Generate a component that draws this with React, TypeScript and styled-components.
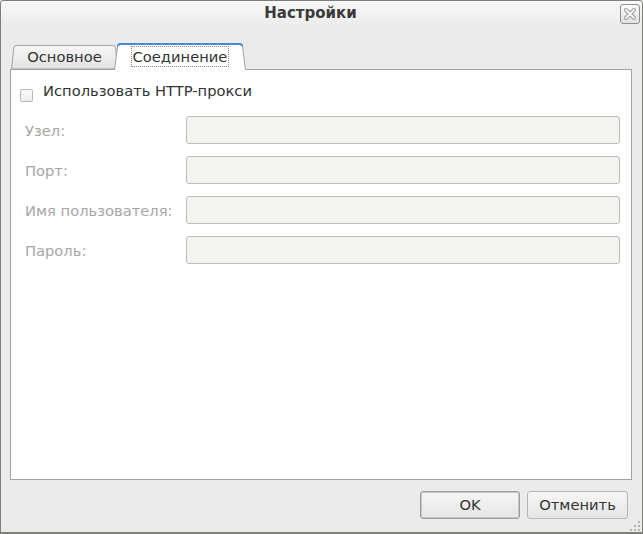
import React from "react";
import styled, { createGlobalStyle } from "styled-components";

const Global = createGlobalStyle`
  html, body { margin: 0; padding: 0; background: #ebebeb; }
  body {
    font-family: "DejaVu Sans", "Liberation Sans", sans-serif;
    font-size: 14.7px;
    color: #333333;
  }
  * { box-sizing: border-box; }
`;

const Window = styled.div`
  position: relative;
  width: 643px;
  height: 534px;
  display: flex;
  flex-direction: column;
  background: #ebebeb;
  border: 1px solid #7f7f7b;
  border-bottom-width: 2px;
  border-radius: 4px 4px 0 0;
  overflow: hidden;
`;

const TitleBar = styled.div`
  flex: none;
  height: 25px;
  display: flex;
  align-items: center;
  background: linear-gradient(#f8f8f8, #ececec);
`;

const Title = styled.div`
  flex: 1;
  text-align: center;
  font-weight: bold;
  font-size: 15px;
  line-height: 17px;
  color: #3a3a3a;
`;

const CloseButton = styled.button`
  width: 20px;
  height: 20px;
  margin-right: 2px;
  padding: 0;
  border: 1px solid #8e8e8e;
  border-radius: 3px;
  background: linear-gradient(#fbfbfb, #e2e2e2);
  display: flex;
  align-items: center;
  justify-content: center;
`;

const Body = styled.div`
  flex: 1;
  min-height: 0;
  display: flex;
  flex-direction: column;
  padding: 17px 10px 0 9px;
`;

const TabBar = styled.div`
  position: relative;
  z-index: 1;
  flex: none;
  height: 27px;
  margin-bottom: -1px;
  padding-left: 1px;
  display: flex;
  align-items: flex-end;
`;

const Tab = styled.div<{ $active?: boolean }>`
  position: relative;
  display: flex;
  align-items: center;
  justify-content: center;
  width: ${(p) => (p.$active ? "132px" : "107px")};
  height: ${(p) => (p.$active ? "27px" : "24px")};
  margin-left: ${(p) => (p.$active ? "-4px" : "0")};
  margin-bottom: ${(p) => (p.$active ? "0" : "1px")};
  padding-bottom: ${(p) => (p.$active ? "1px" : "2px")};
`;

const TabShape = styled.svg`
  position: absolute;
  inset: 0;
`;

const TabLabel = styled.span<{ $focused?: boolean }>`
  position: relative;
  line-height: 17px;
  color: #333333;
  padding: ${(p) => (p.$focused ? "1px 1px" : "0")};
  border: ${(p) => (p.$focused ? "1px dotted #8a8a8a" : "none")};
`;

const Panel = styled.div`
  flex: 1;
  background: #ffffff;
  border: 1px solid #a3a3a3;
  padding: 0 11px 0 9px;
`;

const CheckRow = styled.label`
  display: flex;
  align-items: flex-start;
  padding-top: 12px;
  line-height: 17px;
  color: #333333;
`;

const CheckBox = styled.span`
  width: 13px;
  height: 13px;
  margin-top: 7px;
  margin-right: 10px;
  border: 1px solid #b9b9b1;
  border-radius: 2px;
  background: linear-gradient(#fafaf9, #eeeeec);
`;

const FormGrid = styled.div`
  display: grid;
  grid-template-columns: 150px 1fr;
  grid-auto-rows: 28px;
  column-gap: 11px;
  row-gap: 12px;
  margin-top: 14px;
  padding-left: 5px;
`;

const FieldLabel = styled.div`
  display: flex;
  align-items: center;
  color: #a6a6a6;
  white-space: nowrap;
`;

const Field = styled.div`
  background: #f3f3f1;
  border: 1px solid #bdbdb3;
  border-radius: 3px;
`;

const Footer = styled.div`
  flex: none;
  height: 52px;
  display: flex;
  justify-content: flex-end;
  align-items: flex-start;
  gap: 7px;
  padding: 11px 14px 0 0;
`;

const Button = styled.button<{ $default?: boolean; $w: number }>`
  width: ${(p) => p.$w}px;
  height: 28px;
  padding: 0 0 2px;
  font-family: "DejaVu Sans", "Liberation Sans", sans-serif;
  font-size: 14.7px;
  color: #333333;
  border-radius: 3px;
  border: 1px solid ${(p) => (p.$default ? "#9c9c9c" : "#b5b5b5")};
  box-shadow: ${(p) => (p.$default ? "inset 0 0 0 1px #c9c9c9" : "none")};
  background: linear-gradient(#f6f6f6, #e5e5e5);
`;

const Grip = styled.svg`
  position: absolute;
  right: 2px;
  bottom: 0;
`;

const fields = ["Узел:", "Порт:", "Имя пользователя:", "Пароль:"];

export default function App() {
  return (
    <>
      <Global />
      <Window>
        <TitleBar>
          <Title>Настройки</Title>
          <CloseButton aria-label="close">
            <svg width="14" height="14" viewBox="0 0 14 14">
              <path d="M3 3 L11 11 M11 3 L3 11" stroke="#9b9b9b" strokeWidth="4" strokeLinecap="round" />
              <path d="M3 3 L11 11 M11 3 L3 11" stroke="#f6f6f6" strokeWidth="2" strokeLinecap="round" />
            </svg>
          </CloseButton>
        </TitleBar>
        <Body>
          <TabBar>
            <Tab>
              <TabShape width="107" height="24" viewBox="0 0 107 24">
                <defs>
                  <linearGradient id="tabg" x1="0" y1="0" x2="0" y2="1">
                    <stop offset="0" stopColor="#f7f7f7" />
                    <stop offset="1" stopColor="#e2e2e2" />
                  </linearGradient>
                </defs>
                <path d="M0.5 24 L2.8 3 Q3.2 0.5 5.5 0.5 L102 0.5 Q104.3 0.5 104.6 3 L106.5 24 Z" fill="url(#tabg)" stroke="#a2a2a2" />
              </TabShape>
              <TabLabel>Основное</TabLabel>
            </Tab>
            <Tab $active>
              <TabShape width="132" height="27" viewBox="0 0 132 27">
                <path d="M0.5 27 L3.6 3 Q4 0.5 6.5 0.5 L125.5 0.5 Q128 0.5 128.4 3 L131.5 27 Z" fill="#ffffff" />
                <path d="M0.5 27 L3.6 3 Q4 0.5 6.5 0.5 L125.5 0.5 Q128 0.5 128.4 3 L131.5 27" fill="none" stroke="#a2a2a2" />
                <path d="M3.8 3 Q4.2 1 6.5 1 L125.5 1 Q127.8 1 128.2 3" fill="none" stroke="#4a8ad4" strokeWidth="2" />
              </TabShape>
              <TabLabel $focused>Соединение</TabLabel>
            </Tab>
          </TabBar>
          <Panel>
            <CheckRow>
              <CheckBox />
              Использовать HTTP-прокси
            </CheckRow>
            <FormGrid>
              {fields.map((f) => (
                <React.Fragment key={f}>
                  <FieldLabel>{f}</FieldLabel>
                  <Field />
                </React.Fragment>
              ))}
            </FormGrid>
          </Panel>
        </Body>
        <Footer>
          <Button $default $w={100}>OK</Button>
          <Button $w={101}>Отменить</Button>
        </Footer>
        <Grip width="10" height="11" viewBox="0 0 10 11">
          <g fill="#b3b3b3">
            <rect x="8" y="0" width="2" height="2" />
            <rect x="4" y="4" width="2" height="2" />
            <rect x="8" y="4" width="2" height="2" />
            <rect x="0" y="8" width="2" height="2" />
            <rect x="4" y="8" width="2" height="2" />
            <rect x="8" y="8" width="2" height="2" />
          </g>
        </Grip>
      </Window>
    </>
  );
}
